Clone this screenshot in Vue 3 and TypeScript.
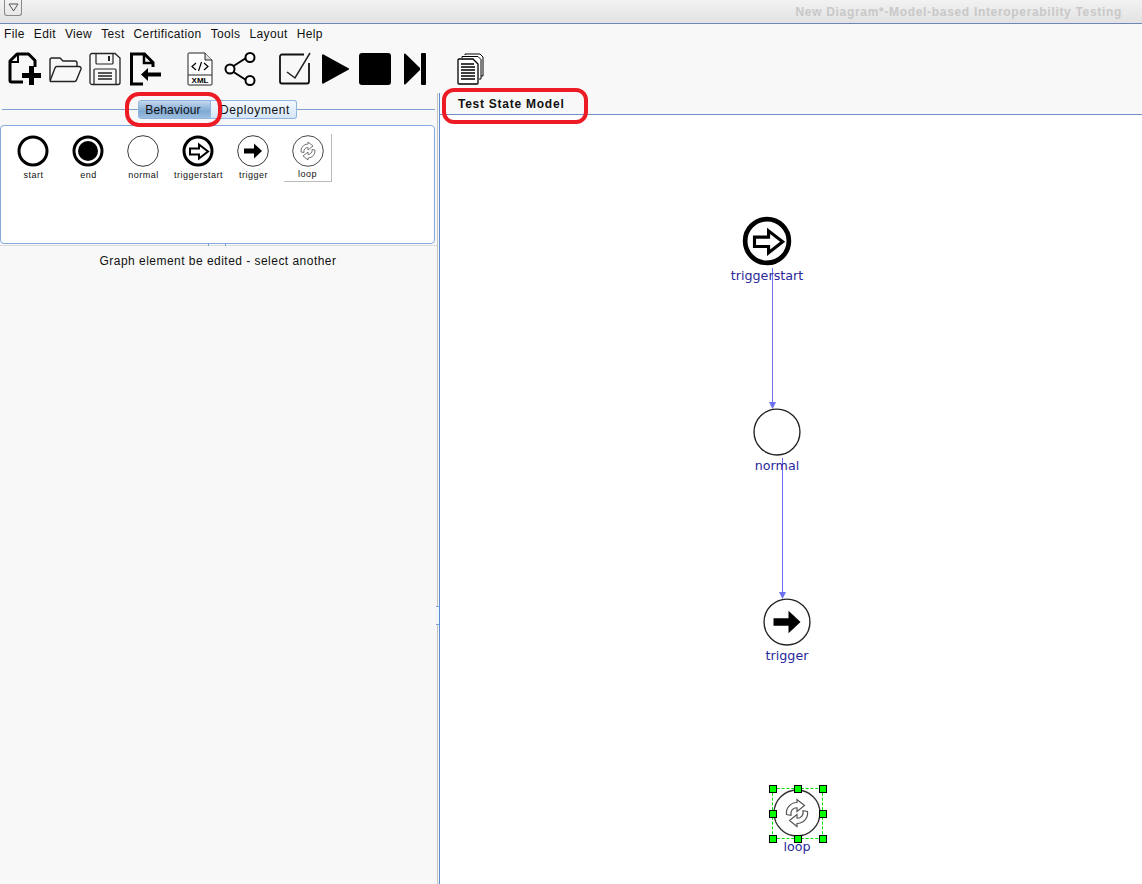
<script setup lang="ts">
type NodeKind = 'start' | 'end' | 'normal' | 'triggerstart' | 'trigger' | 'loop';

interface CanvasNode {
  kind: NodeKind;
  x: number;
  y: number;
  size: number;
  selected?: boolean;
}

const menus = ['File', 'Edit', 'View', 'Test', 'Certification', 'Tools', 'Layout', 'Help'];

const palette: NodeKind[] = ['start', 'end', 'normal', 'triggerstart', 'trigger', 'loop'];

// canvas coordinates are relative to the diagram pane
const nodes: CanvasNode[] = [
  { kind: 'triggerstart', x: 302, y: 101, size: 50 },
  { kind: 'normal', x: 313, y: 293, size: 48 },
  { kind: 'trigger', x: 323, y: 483, size: 48 },
  { kind: 'loop', x: 333, y: 674, size: 48, selected: true },
];

const handles = [
  [0, 0], [25, 0], [50, 0],
  [0, 25], [50, 25],
  [0, 50], [25, 50], [50, 50],
];
</script>

<template>
  <div class="app">
    <svg class="defs" width="0" height="0" aria-hidden="true">
      <defs>
        <symbol id="n-start" viewBox="0 0 32 32">
          <circle cx="16" cy="16" r="14" fill="#fff" stroke="#000" stroke-width="3" />
        </symbol>
        <symbol id="n-end" viewBox="0 0 32 32">
          <circle cx="16" cy="16" r="14" fill="#fff" stroke="#000" stroke-width="3" />
          <circle cx="16" cy="16" r="10" fill="#000" />
        </symbol>
        <symbol id="n-normal" viewBox="0 0 32 32">
          <circle cx="16" cy="16" r="15.3" fill="#fff" stroke="#222" stroke-width=".9" />
        </symbol>
        <symbol id="n-triggerstart" viewBox="0 0 32 32">
          <circle cx="16" cy="16" r="14" fill="#fff" stroke="#000" stroke-width="3" />
          <path d="M8 13.500h9v-4l9 7-9 7v-4H8z" fill="#fff" stroke="#000" stroke-width="2" />
        </symbol>
        <symbol id="n-trigger" viewBox="0 0 32 32">
          <circle cx="16" cy="16" r="15.3" fill="#fff" stroke="#222" stroke-width=".9" />
          <path d="M7 13.500h10v-5l8 7.500-8 7.500v-5H7z" fill="#000" />
        </symbol>
        <symbol id="n-loop" viewBox="0 0 32 32">
          <circle cx="16" cy="16" r="15.3" fill="#fff" stroke="#333" stroke-width=".9" />
          <g fill="none" stroke="#555" stroke-width=".8">
            <path d="M9 17a7 7 0 0 1 7-8V7l5 4-5 4v-2.500a4 4 0 0 0-4 5z" />
            <path d="M23 15a7 7 0 0 1-7 8v2l-5-4 5-4v2.500a4 4 0 0 0 4-5z" />
          </g>
        </symbol>
      </defs>
    </svg>

    <header class="titlebar">
      <span class="titlebar__menu">
        <svg width="11" height="9" viewBox="0 0 11 9"><path d="M1 1h9L5.500 8z" fill="none" stroke="#555" /></svg>
      </span>
      <span class="titlebar__title">New Diagram*-Model-based Interoperability Testing</span>
    </header>

    <nav class="menubar">
      <span v-for="menu in menus" :key="menu" class="menubar__item">{{ menu }}</span>
    </nav>

    <div class="toolbar">
      <!-- new -->
      <svg class="tool tool--new" width="34" height="34" viewBox="0 0 34 34">
        <path d="M15 30H3.500a1.500 1.500 0 0 1-1.500-1.500V9l7-7h11.500L27 8.500V15" fill="none" stroke="#000" stroke-width="3" stroke-linejoin="round" />
        <path d="M3 10h7V3" fill="none" stroke="#000" stroke-width="2" />
        <path d="M21 14h5v7h7v5h-7v7h-5v-7h-7v-5h7z" fill="#000" />
      </svg>
      <!-- open -->
      <svg class="tool tool--open" width="34" height="30" viewBox="0 0 34 30">
        <path d="M2 26V6a2 2 0 0 1 2-2h8l3 3h12a2 2 0 0 1 2 2v3" fill="none" stroke="#222" stroke-width="1.400" />
        <path d="M2 27l5-13a2 2 0 0 1 2-1.500h22a2 2 0 0 1 2 2.500l-4.500 11a2 2 0 0 1-2 1.500H3z" fill="none" stroke="#222" stroke-width="1.400" stroke-linejoin="round" />
      </svg>
      <!-- save -->
      <svg class="tool tool--save" width="32" height="34" viewBox="0 0 32 34">
        <path d="M3 1.500h23L31 6v24.500a2 2 0 0 1-2 2H3a2 2 0 0 1-2-2v-27a2 2 0 0 1 2-2z" fill="none" stroke="#222" stroke-width="1.300" />
        <path d="M7 2v9a1 1 0 0 0 1 1h15a1 1 0 0 0 1-1V2" fill="none" stroke="#222" stroke-width="1.200" />
        <path d="M19 4h2v5h-2z" fill="#222" />
        <path d="M5 32V18a1 1 0 0 1 1-1h20a1 1 0 0 1 1 1v14" fill="none" stroke="#222" stroke-width="1.200" />
        <path d="M9 21h14M9 24h14M9 27h14" stroke="#222" stroke-width="1.300" />
      </svg>
      <!-- import -->
      <svg class="tool tool--import" width="32" height="34" viewBox="0 0 32 34">
        <path d="M14 32H2.500V2h13L24 10.500V15" fill="none" stroke="#000" stroke-width="3" />
        <path d="M15 3v8h8" fill="none" stroke="#000" stroke-width="2.500" />
        <path d="M32 20.500H19V16l-7 6.500 7 6.500v-4.500h13z" fill="#000" />
      </svg>
      <!-- xml -->
      <svg class="tool tool--xml" width="26" height="34" viewBox="0 0 26 34">
        <path d="M1 2a1 1 0 0 1 1-1h16l7 7v24a1 1 0 0 1-1 1H2a1 1 0 0 1-1-1z" fill="#fff" stroke="#222" />
        <path d="M18 1v7h7" fill="#ddd" stroke="#222" />
        <path d="M1 23h24" stroke="#222" />
        <path d="M9 11l-4 3.500L9 18M17 11l4 3.500-4 3.500M14.500 10l-3 9" fill="none" stroke="#000" stroke-width="1.200" />
        <text x="13" y="31" class="tool__xml">XML</text>
      </svg>
      <!-- share -->
      <svg class="tool tool--share" width="33" height="34" viewBox="0 0 33 34">
        <path d="M8 15L22 6M8 19l14 9" stroke="#000" stroke-width="2" />
        <circle cx="6" cy="17" r="4.500" fill="#fff" stroke="#000" stroke-width="2" />
        <circle cx="26" cy="5.500" r="4.500" fill="#fff" stroke="#000" stroke-width="2" />
        <circle cx="26" cy="28.500" r="4.500" fill="#fff" stroke="#000" stroke-width="2" />
      </svg>
      <!-- validate -->
      <svg class="tool tool--check" width="33" height="33" viewBox="0 0 33 33">
        <path d="M25 2.500H3a2 2 0 0 0-2 2v25a2 2 0 0 0 2 2h25a2 2 0 0 0 2-2V11" fill="none" stroke="#111" stroke-width="1.800" />
        <path d="M8 20l8 6L31 1" fill="none" stroke="#222" stroke-width="1.500" />
      </svg>
      <!-- run -->
      <svg class="tool tool--play" width="28" height="32" viewBox="0 0 28 32">
        <path d="M1 2.500a1 1 0 0 1 1.500-1L27 15a1 1 0 0 1 0 2L2.500 30.500a1 1 0 0 1-1.500-1z" fill="#000" />
      </svg>
      <!-- stop -->
      <svg class="tool tool--stop" width="32" height="32" viewBox="0 0 32 32">
        <rect width="32" height="32" rx="3" fill="#000" />
      </svg>
      <!-- step -->
      <svg class="tool tool--step" width="22" height="32" viewBox="0 0 22 32">
        <path d="M0 1.500a1 1 0 0 1 1.500-.8L16 15v2L1.500 31.300a1 1 0 0 1-1.500-.8z" fill="#000" />
        <rect x="17" width="5" height="32" rx="1" fill="#000" />
      </svg>
      <!-- report -->
      <svg class="tool tool--copy" width="27" height="32" viewBox="0 0 27 32">
        <path d="M8 2V1h15l3 3v19h-2" fill="#fff" stroke="#000" />
        <path d="M5 5V3.500h16l3 3V26h-2" fill="#fff" stroke="#000" />
        <path d="M1 7a1 1 0 0 1 1-1h14l5 5v19a1 1 0 0 1-1 1H2a1 1 0 0 1-1-1z" fill="#fff" stroke="#000" stroke-width="1.300" />
        <path d="M4 11h13M4 14h14M4 17h14M4 20h14M4 23h14M4 26h14" stroke="#000" stroke-width="1.500" />
      </svg>
    </div>

    <main class="workspace">
      <aside class="side">
        <div class="side__tabs">
          <button class="side__tab side__tab--active" type="button">Behaviour</button>
          <button class="side__tab side__tab--plain" type="button">Deployment</button>
          <span class="mark mark--behaviour" />
        </div>

        <section class="palette">
          <div
            v-for="kind in palette"
            :key="kind"
            class="palette__item"
            :class="{ 'palette__item--raised': kind === 'loop' }"
          >
            <svg width="32" height="32"><use :href="`#n-${kind}`" /></svg>
            <span class="palette__label">{{ kind }}</span>
          </div>
        </section>

        <div class="side__divider">
          <i /><i />
        </div>
        <p class="side__hint">Graph element be edited - select another</p>
      </aside>

      <div class="splitter">
        <i class="splitter__grip" />
      </div>

      <section class="diagram">
        <div class="diagram__tabs">
          <span class="diagram__tab">Test State Model</span>
          <span class="mark mark--tab" />
        </div>
        <div class="canvas">
          <svg class="edges" width="702" height="769">
            <path d="M332.500 153V288" stroke="#6a70ee" fill="none" />
            <path d="M332.500 294l-3.500-7h7z" fill="#6a70ee" />
            <path d="M342.500 343V478" stroke="#6a70ee" fill="none" />
            <path d="M342.500 484l-3.500-7h7z" fill="#6a70ee" />
          </svg>
          <div
            v-for="node in nodes"
            :key="node.kind"
            class="node"
            :style="{ left: `${node.x}px`, top: `${node.y}px`, width: `${node.size}px` }"
          >
            <svg :width="node.size" :height="node.size"><use :href="`#n-${node.kind}`" /></svg>
            <span class="node__label">{{ node.kind }}</span>
            <div v-if="node.selected" class="selection">
              <i
                v-for="(h, i) in handles"
                :key="i"
                class="selection__handle"
                :style="{ left: `${h[0] - 4}px`, top: `${h[1] - 4}px` }"
              />
            </div>
          </div>
        </div>
      </section>
    </main>
  </div>
</template>

<style>
html,
body {
  margin: 0;
  background: #f8f8f8;
}
</style>

<style scoped>
.app {
  display: flex;
  flex-direction: column;
  width: 1142px;
  height: 884px;
  overflow: hidden;
  font-family: "Liberation Sans", Arial, sans-serif;
  font-size: 12px;
  color: #111;
  background: #f8f8f8;
}

.defs {
  position: absolute;
}

.titlebar {
  display: flex;
  flex: none;
  align-items: center;
  justify-content: space-between;
  box-sizing: border-box;
  height: 24px;
  padding: 0 20px 0 4px;
  background: linear-gradient(#f2f2f2, #e2e2e2);
  border-bottom: 1px solid #6f86b4;
}

.titlebar__menu {
  display: flex;
  align-items: center;
  justify-content: center;
  box-sizing: border-box;
  width: 18px;
  height: 16px;
  margin-top: -8px;
  border: 1px solid #8a8a8a;
  border-top: 0;
  border-radius: 0 0 3px 3px;
}

.titlebar__title {
  font-size: 12px;
  font-weight: 700;
  letter-spacing: 0.68px;
  color: #c8c8c8;
}

.menubar {
  display: flex;
  flex: none;
  gap: 9px;
  align-items: center;
  height: 20px;
  padding-left: 4px;
  letter-spacing: 0.36px;
}

.toolbar {
  position: relative;
  flex: none;
  display: flex;
  align-items: center;
  height: 49px;
  padding-left: 8px;
}

.tool {
  flex: none;
}

.tool--open { margin-left: 6px; }
.tool--save { margin-left: 7px; }
.tool--import { margin-left: 8px; }
.tool--xml { margin-left: 26px; }
.tool--share { margin-left: 11px; }
.tool--check { margin-left: 22px; }
.tool--play { margin-left: 9px; }
.tool--stop { margin-left: 10px; }
.tool--step { margin-left: 13px; }
.tool--copy { margin-left: 31px; }

.tool__xml {
  font-size: 8px;
  font-weight: 700;
  text-anchor: middle;
  fill: #000;
}

.workspace {
  display: flex;
  flex: 1;
  min-height: 0;
}

.side {
  display: flex;
  flex-direction: column;
  flex: none;
  width: 437px;
}

.side__tabs {
  position: relative;
  display: flex;
  flex: none;
  height: 32px;
  padding-left: 138px;
  padding-top: 7px;
  box-sizing: border-box;
}

.side__tabs::before {
  content: "";
  position: absolute;
  top: 16px;
  left: 2px;
  right: 2px;
  border-top: 1px solid #7f9fd0;
}

.side__tab {
  position: relative;
  box-sizing: border-box;
  height: 19px;
  padding: 0;
  font: inherit;
  color: #111;
  border: 1px solid #8fb5e0;
}

.side__tab--active {
  width: 73px;
  padding-right: 3px;
  letter-spacing: 0.15px;
  background: linear-gradient(#c3d8ee, #7fa9d3 60%, #9dbfdf);
  border-radius: 3px 0 0 3px;
}

.side__tab--plain {
  width: 86px;
  padding-left: 3px;
  letter-spacing: 0.6px;
  background: linear-gradient(#f4f9fe, #d3e5f8);
  border-left: 0;
  border-radius: 0 3px 3px 0;
}

.mark {
  position: absolute;
  box-sizing: border-box;
  pointer-events: none;
  border: 4px solid #ed1c24;
  z-index: 2;
}

.mark--behaviour {
  top: -1px;
  left: 125px;
  width: 97px;
  height: 35px;
  border-radius: 14px;
}

.mark--tab {
  top: -5px;
  left: 2px;
  width: 146px;
  height: 36px;
  border-radius: 12px;
}

.palette {
  display: flex;
  flex: none;
  box-sizing: border-box;
  height: 119px;
  width: 435px;
  padding: 9px 0 0 4px;
  background: #fff;
  border: 1px solid #84a9dc;
  border-radius: 4px;
}

.palette__item {
  display: flex;
  flex-direction: column;
  align-items: center;
  box-sizing: border-box;
  width: 55px;
  height: 48px;
}

.palette__item--raised {
  width: 48px;
  margin-left: 4px;
  margin-top: -1px;
  padding-top: 1px;
  border-right: 1px solid #bbb;
  border-bottom: 1px solid #bbb;
}

.palette__label {
  margin-top: 3px;
  padding-left: 2px;
  font-size: 9px;
  line-height: 11px;
  letter-spacing: 0.5px;
  white-space: nowrap;
}

.palette__item--raised .palette__label {
  margin-top: 2px;
  padding-left: 0;
}

.side__divider {
  position: relative;
  flex: none;
  height: 8px;
  box-sizing: border-box;
  border-top: 1px solid #dcdcdc;
  margin-top: 1px;
}

.side__divider i {
  position: absolute;
  top: -3px;
  left: 208px;
  width: 1px;
  height: 3px;
  background: #7d9fd0;
}

.side__divider i + i {
  left: 225px;
}

.side__hint {
  margin: 1px 0 0;
  line-height: 14px;
  text-align: center;
  padding-right: 1px;
  letter-spacing: 0.47px;
}

.splitter {
  position: relative;
  flex: none;
  box-sizing: border-box;
  width: 3px;
  border-left: 1px solid #c4c4c4;
  border-right: 1px solid #5b8bd0;
}

.splitter__grip {
  position: absolute;
  top: 513px;
  left: -2px;
  width: 3px;
  height: 17px;
  background: #f0f6fd;
  border-top: 1px solid #7fa5d8;
  border-bottom: 1px solid #7fa5d8;
}

.diagram {
  display: flex;
  flex: 1;
  flex-direction: column;
  min-width: 0;
}

.diagram__tabs {
  position: relative;
  display: flex;
  flex: none;
  box-sizing: border-box;
  height: 22px;
  border-bottom: 1px solid #6f8fc8;
}

.diagram__tab {
  padding: 4px 0 0 18px;
  font-weight: 700;
  letter-spacing: 0.75px;
}

.canvas {
  position: relative;
  flex: 1;
  background: #fff;
}

.edges {
  position: absolute;
  top: 0;
  left: 0;
}

.node {
  position: absolute;
  display: flex;
  flex-direction: column;
  align-items: center;
}

.node > svg {
  display: block;
}

.node__label {
  margin-top: 2px;
  font-family: "DejaVu Sans", sans-serif;
  font-size: 12.7px;
  line-height: 15px;
  color: #28289a;
  white-space: nowrap;
}

.selection {
  position: absolute;
  top: -1px;
  left: -1px;
  box-sizing: border-box;
  width: 51px;
  height: 51px;
  border: 1px dashed #00e000;
}

.selection__handle {
  position: absolute;
  box-sizing: border-box;
  width: 8px;
  height: 8px;
  background: #00ff00;
  border: 1px solid #000;
}
</style>
